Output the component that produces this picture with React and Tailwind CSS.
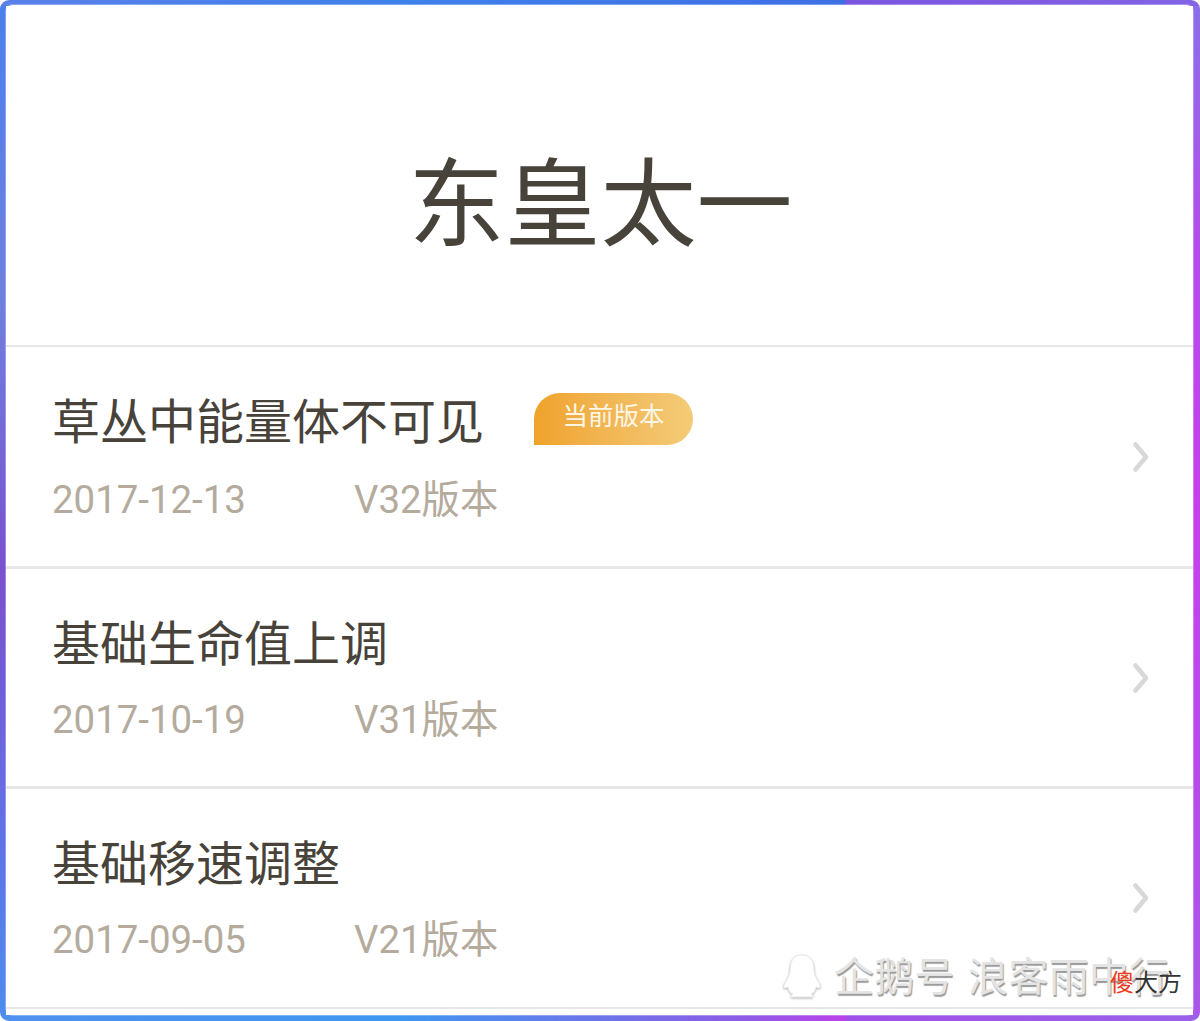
const rows = [
  { title: "草丛中能量体不可见", date: "2017-12-13", ver: "V32版本", badge: true, h: "h-[222px] border-b-[3px]", gap: "mt-[26px]" },
  { title: "基础生命值上调", date: "2017-10-19", ver: "V31版本", h: "h-[220px] border-b-[3px]", gap: "mt-[24px]" },
  { title: "基础移速调整", date: "2017-09-05", ver: "V21版本", h: "h-[220px] border-b-2", gap: "mt-[24px]" },
];
export default function App() {
  return (
    <div className="relative h-[1021px] w-[1200px] overflow-hidden rounded-[9px] pt-[5px] pb-[6px] pl-[6px] pr-[7px] font-['Roboto','Noto_Sans_CJK_SC',sans-serif] [background:linear-gradient(90deg,#5b80ea_0px,#3f80ea_400px,#3f6fe6_845px,#7b55e0_846px,#8264e4_1200px)_top/100%_6px_no-repeat,linear-gradient(90deg,#4f90ee_0px,#3f97f0_400px,#8f5ae6_750px,#bb42ea_845px,#a050e8_846px,#9a62e8_1200px)_bottom/100%_6px_no-repeat,linear-gradient(180deg,#4a80ee_0px,#6f7fe0_300px,#7a50d0_580px,#6a68e0_760px,#4a8eee_1021px)_left/6px_100%_no-repeat,linear-gradient(180deg,#8a70e8_0px,#b44cea_250px,#c440e8_500px,#b84aea_750px,#a858e8_1021px)_right/7px_100%_no-repeat]">
      <div className="flex h-full flex-col overflow-hidden rounded-[7px] bg-white shadow-[0_0_0_1px_rgba(255,255,255,0.3)]">
        <div className="flex h-[342px] shrink-0 items-center justify-center border-b-2 border-[#e7e7e7] pt-[60px] pl-[2px] text-[96px] leading-none text-[#48433a]">
          <span>东皇太一</span>
        </div>
        {rows.map((r) => (
          <div key={r.title} className={`flex shrink-0 items-center border-[#e7e7e7] pl-[46px] pr-[44px] ${r.h}`}>
            <div className="flex-1 self-start pt-[48px]">
              <div className="flex items-start">
                <span className="text-[48px] leading-[56px] text-[#48433a]">{r.title}</span>
                {r.badge && (
                  <span className="ml-[50px] -mt-[2px] flex h-[52px] w-[159px] items-center justify-center rounded-[26px] rounded-bl-none bg-gradient-to-r from-[#efa32a] to-[#f3cb77] pb-[5px] text-[25.5px] text-[#fdf6e6]">
                    当前版本
                  </span>
                )}
              </div>
              <div className={`flex text-[38.4px] leading-[46px] text-[#b4ab9d] ${r.gap}`}>
                <span className="w-[302px]">{r.date}</span>
                <span>{r.ver}</span>
              </div>
            </div>
            <svg width="16" height="30" viewBox="0 0 16 30" fill="none" stroke="#d8d8d8" strokeWidth="4.5" strokeLinecap="round" strokeLinejoin="round">
              <path d="M2.5 2.5 L13 15 L2.5 27.5" />
            </svg>
          </div>
        ))}
      </div>
      <div className="absolute left-[781px] top-[953px] flex items-center">
        <svg width="42" height="46" viewBox="0 0 42 46" className="drop-shadow-[0_1px_1px_rgba(120,120,120,0.55)]">
          <path d="M21 2C11 2 9 10 9 18C9 22 6 26 3 32C2 35 4 36 7 34C8 38 9 40 12 41C10 42 9 44 11 44H31C33 44 32 42 30 41C33 40 34 38 35 34C38 36 40 35 39 32C36 26 33 22 33 18C33 10 31 2 21 2Z" fill="#ffffff" stroke="#e8e8e8" strokeWidth="1" />
        </svg>
      </div>
      <span className="absolute left-[834px] top-[952px] whitespace-nowrap text-[40px] leading-[52px] tracking-[0.3px] text-[#e4e4e4] [word-spacing:3px] [text-shadow:1px_2px_1px_#9a9a9a]">
        企鹅号 浪客雨中行
      </span>
      <span className="absolute left-[1110px] top-[968px] whitespace-nowrap text-[24px] leading-[30px] text-[#333333]">
        <span className="text-[#ee3a1c]">傻</span>大方
      </span>
    </div>
  );
}
